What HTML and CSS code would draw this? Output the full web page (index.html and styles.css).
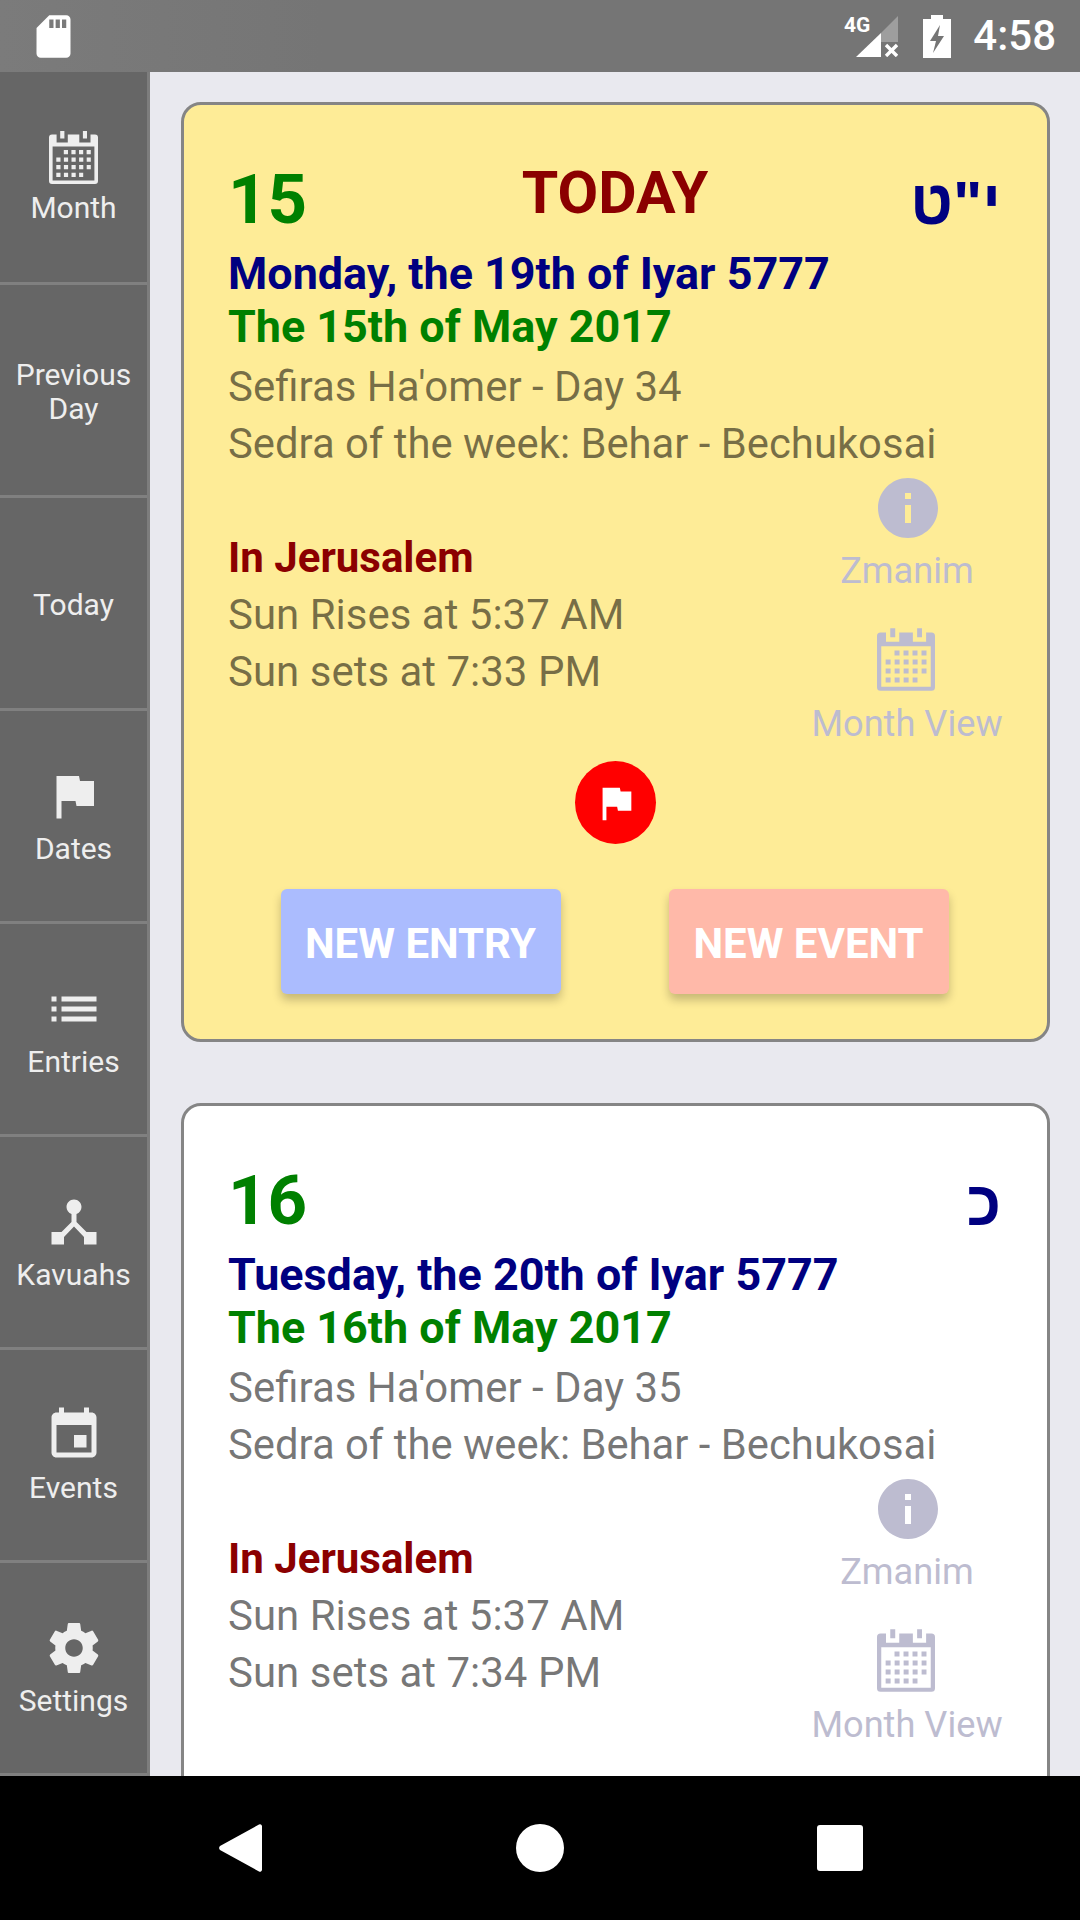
FILE: index.html
```html
<!DOCTYPE html>
<html lang="en">
<head>
  <meta charset="UTF-8">
  <title>Today</title>
  <link rel="stylesheet" href="styles.css">
</head>
<body>

  <svg class="defs" width="0" height="0">
    <symbol id="i-calendar" viewBox="0 0 49 53">
      <path fill="currentColor" fill-rule="evenodd" d="M3 3.6H46a3 3 0 0 1 3 3V50a3 3 0 0 1-3 3H3a3 3 0 0 1-3-3V6.6a3 3 0 0 1 3-3zM7.6 3.6V11.5H18.8V3.6zM30.3 3.6V11.5H41.5V3.6zM3.6 15.4V49.6H45.4V15.4z"/>
      <path fill="currentColor" d="M11.2 0h4.2v7.6h-4.2zM33.9 0H38v7.6h-4.1z"/>
      <path fill="none" stroke="currentColor" stroke-width="4.2" stroke-dasharray="4.2 3.4" d="M14.8 21.1H41.8M7.3 28.7H41.8M7.3 36.2H41.8M7.3 43.8H34.2"/>
    </symbol>
    <symbol id="i-flag" viewBox="0 0 24 24">
      <path fill="currentColor" d="M14.4 6L14 4H5v17h2v-7h5.6l.4 2h7V6z"/>
    </symbol>
    <symbol id="i-info" viewBox="0 0 24 24">
      <path fill="currentColor" d="M12 2C6.48 2 2 6.48 2 12s4.48 10 10 10 10-4.48 10-10S17.52 2 12 2zm1 15h-2v-6h2v6zm0-8h-2V7h2v2z"/>
    </symbol>
  </svg>

  <header class="status-bar">
    <svg class="sd-icon" viewBox="0 0 24 24"><path fill="currentColor" d="M18 2h-8L4.02 8 4 20c0 1.1.9 2 2 2h12c1.1 0 2-.9 2-2V4c0-1.1-.9-2-2-2zm-6 6h-2V4h2v4zm3 0h-2V4h2v4zm3 0h-2V4h2v4z"/></svg>
    <div class="status-right">
      <div class="signal">
        <span class="signal-label">4G</span>
        <svg class="signal-icon" viewBox="0 0 42 41">
          <path fill="#fff" opacity=".3" d="M25 17L42 0V26H25z"/>
          <path fill="#fff" d="M0 41L25 17V41z"/>
          <path stroke="#fff" stroke-width="3.4" d="M30 29L41 40M41 29L30 40"/>
        </svg>
      </div>
      <svg class="battery-icon" viewBox="0 0 28 43">
        <path fill="#fff" fill-rule="evenodd" d="M8 0h12v4h8v39H0V4h8zM17 10L7 26h6l-3 12L21 21h-6z"/>
      </svg>
      <span class="clock">4:58</span>
    </div>
  </header>

  <div class="app">
    <nav class="sidebar">
      <a class="nav-item">
        <svg class="nav-icon nav-icon-cal"><use href="#i-calendar"/></svg>
        <span>Month</span>
      </a>
      <a class="nav-item nav-text"><span>Previous<br>Day</span></a>
      <a class="nav-item nav-text"><span>Today</span></a>
      <a class="nav-item">
        <svg class="nav-icon"><use href="#i-flag"/></svg>
        <span>Dates</span>
      </a>
      <a class="nav-item">
        <svg class="nav-icon" viewBox="0 0 24 24"><path fill="currentColor" d="M3 13h2v-2H3v2zm0 4h2v-2H3v2zm0-8h2V7H3v2zm4 4h14v-2H7v2zm0 4h14v-2H7v2zM7 7v2h14V7H7z"/></svg>
        <span>Entries</span>
      </a>
      <a class="nav-item">
        <svg class="nav-icon" viewBox="0 0 24 24"><path fill="currentColor" d="M17 16l-4-4V8.82C14.16 8.4 15 7.3 15 6c0-1.66-1.34-3-3-3S9 4.34 9 6c0 1.3.84 2.4 2 2.82V12l-4 4H3v5h5v-3.05l4-4.2 4 4.2V21h5v-5h-4z"/></svg>
        <span>Kavuahs</span>
      </a>
      <a class="nav-item">
        <svg class="nav-icon" viewBox="0 0 24 24"><path fill="currentColor" d="M17 12h-5v5h5v-5zM16 1v2H8V1H6v2H5c-1.11 0-1.99.9-1.99 2L3 19c0 1.1.89 2 2 2h14c1.1 0 2-.9 2-2V5c0-1.1-.9-2-2-2h-1V1h-2zm3 18H5V8h14v11z"/></svg>
        <span>Events</span>
      </a>
      <a class="nav-item">
        <svg class="nav-icon" viewBox="0 0 24 24"><path fill="currentColor" d="M19.43 12.98c.04-.32.07-.64.07-.98s-.03-.66-.07-.98l2.11-1.65c.19-.15.24-.42.12-.64l-2-3.46c-.12-.22-.39-.3-.61-.22l-2.49 1c-.52-.4-1.08-.73-1.69-.98l-.38-2.65C14.46 2.18 14.25 2 14 2h-4c-.25 0-.46.18-.49.42l-.38 2.65c-.61.25-1.17.59-1.69.98l-2.49-1c-.23-.09-.49 0-.61.22l-2 3.46c-.13.22-.07.49.12.64l2.11 1.65c-.04.32-.07.65-.07.98s.03.66.07.98l-2.11 1.65c-.19.15-.24.42-.12.64l2 3.46c.12.22.39.3.61.22l2.49-1c.52.4 1.08.73 1.69.98l.38 2.65c.03.24.24.42.49.42h4c.25 0 .46-.18.49-.42l.38-2.65c.61-.25 1.17-.59 1.69-.98l2.49 1c.23.09.49 0 .61-.22l2-3.46c.12-.22.07-.49-.12-.64l-2.11-1.65zM12 15.5c-1.93 0-3.5-1.57-3.5-3.5s1.57-3.5 3.5-3.5 3.5 1.57 3.5 3.5-1.57 3.5-3.5 3.5z"/></svg>
        <span>Settings</span>
      </a>
    </nav>

    <main class="days">
      <section class="day-card is-today">
        <div class="day-head">
          <span class="day-num">15</span>
          <span class="day-today">TODAY</span>
          <span class="day-heb" lang="he" dir="rtl">י"ט</span>
        </div>
        <div class="day-jewish">Monday, the 19th of Iyar 5777</div>
        <div class="day-civil">The 15th of May 2017</div>
        <div class="day-line">Sefiras Ha'omer - Day 34</div>
        <div class="day-line day-sedra">Sedra of the week: Behar - Bechukosai</div>
        <div class="day-body">
          <div class="day-times">
            <div class="day-place">In Jerusalem</div>
            <div class="day-line">Sun Rises at 5:37 AM</div>
            <div class="day-line">Sun sets at 7:33 PM</div>
          </div>
          <div class="day-links">
            <a class="day-link">
              <svg class="link-info"><use href="#i-info"/></svg>
              <span>Zmanim</span>
            </a>
            <a class="day-link">
              <svg class="link-cal"><use href="#i-calendar"/></svg>
              <span>Month View</span>
            </a>
          </div>
        </div>
        <div class="day-flag">
          <span class="flag-dot"><svg class="flag-icon"><use href="#i-flag"/></svg></span>
        </div>
        <div class="day-actions">
          <button class="btn btn-entry">NEW ENTRY</button>
          <button class="btn btn-event">NEW EVENT</button>
        </div>
      </section>

      <section class="day-card">
        <div class="day-head">
          <span class="day-num">16</span>
          <span class="day-today"></span>
          <span class="day-heb" lang="he" dir="rtl">כ</span>
        </div>
        <div class="day-jewish">Tuesday, the 20th of Iyar 5777</div>
        <div class="day-civil">The 16th of May 2017</div>
        <div class="day-line">Sefiras Ha'omer - Day 35</div>
        <div class="day-line day-sedra">Sedra of the week: Behar - Bechukosai</div>
        <div class="day-body">
          <div class="day-times">
            <div class="day-place">In Jerusalem</div>
            <div class="day-line">Sun Rises at 5:37 AM</div>
            <div class="day-line">Sun sets at 7:34 PM</div>
          </div>
          <div class="day-links">
            <a class="day-link">
              <svg class="link-info"><use href="#i-info"/></svg>
              <span>Zmanim</span>
            </a>
            <a class="day-link">
              <svg class="link-cal"><use href="#i-calendar"/></svg>
              <span>Month View</span>
            </a>
          </div>
        </div>
        <div class="day-actions">
          <button class="btn btn-entry" aria-label="New entry"></button>
          <button class="btn btn-event" aria-label="New event"></button>
        </div>
      </section>
    </main>
  </div>

  <footer class="android-nav">
    <svg class="nav-back" viewBox="0 0 43 48"><path fill="#fff" d="M40 .6a2 2 0 0 1 3 1.6V45.800a2 2 0 0 1-3 1.600L1 26a3 3 0 0 1 0-4z"/></svg>
    <span class="nav-home"></span>
    <span class="nav-recent"></span>
  </footer>

</body>
</html>
```

FILE: styles.css
```css
* {
  box-sizing: border-box;
}

html, body {
  margin: 0;
  height: 1920px;
  overflow: hidden;
}

body {
  font-family: Roboto, sans-serif;
  display: flex;
  flex-direction: column;
  background: #000;
}

.defs {
  display: block;
  height: 0;
}

/* status bar */
.status-bar {
  height: 72px;
  flex: none;
  display: flex;
  align-items: center;
  justify-content: space-between;
  padding: 0 24px 0 28px;
  background: linear-gradient(90deg, #7b7b7b, #757575 30%);
  color: #fff;
}

.sd-icon {
  width: 51px;
  height: 51px;
}

.status-right {
  display: flex;
  align-items: center;
}

.signal {
  display: flex;
  align-items: flex-start;
  height: 41px;
  margin-right: 25px;
}

.signal-label {
  font-size: 21px;
  font-weight: 700;
  line-height: 18px;
  margin-right: -14px;
}

.signal-icon {
  width: 42px;
  height: 41px;
}

.battery-icon {
  width: 28px;
  height: 43px;
  margin-right: 22px;
}

.clock {
  font-size: 42px;
  font-weight: 500;
  line-height: 72px;
}

/* sidebar + content */
.app {
  flex: 1;
  display: flex;
  min-height: 0;
  overflow: hidden;
}

.sidebar {
  width: 150px;
  flex: none;
  background: #666;
  border-right: 3px solid #7d7d7d;
  display: flex;
  flex-direction: column;
}

.nav-item {
  height: 213px;
  flex: none;
  border-bottom: 3px solid #808080;
  color: #eee;
  font-size: 30px;
  line-height: 34px;
  text-align: center;
  display: flex;
  flex-direction: column;
  align-items: center;
  justify-content: center;
}

.nav-text {
  padding-top: 3px;
}

.nav-icon {
  width: 60px;
  height: 60px;
  margin-bottom: 6px;
  color: #eee;
}

.nav-icon-cal {
  width: 49px;
  height: 53px;
  margin-top: 1px;
  margin-bottom: 7px;
}

.days {
  flex: 1;
  min-width: 0;
  background: #e9e9ef;
  padding: 30px 30px 0 31px;
  display: flex;
  flex-direction: column;
  gap: 61px;
  overflow: hidden;
}

.day-card {
  flex: none;
  height: 940px;
  background: #fff;
  border: 3px solid #858585;
  border-radius: 20px;
  padding: 58px 0 0 44px;
}

.is-today {
  background: #feec97;
}

.day-card:not(.is-today) {
  margin-bottom: -300px;
}

.day-head {
  display: grid;
  grid-template-columns: 1fr auto 1fr;
  align-items: start;
  padding-right: 46px;
  height: 84px;
}

.day-num {
  color: #008000;
  font-size: 69px;
  font-weight: 700;
  line-height: 70px;
  padding-top: 2px;
}

.day-today {
  color: #8b0000;
  font-size: 59px;
  font-weight: 700;
  line-height: 60px;
  margin-left: 1px;
}

.day-heb {
  color: #000080;
  font-family: "Liberation Sans", sans-serif;
  font-size: 62px;
  font-weight: 700;
  line-height: 70px;
  text-align: right;
  padding-top: 5px;
}

.day-jewish,
.day-civil,
.day-place {
  font-size: 44.9px;
  font-weight: 700;
  line-height: 53px;
}

.day-jewish {
  color: #000080;
}

.day-civil {
  color: #008000;
  margin-bottom: 5px;
}

.day-place {
  color: #8b0000;
  font-size: 42px;
  line-height: 57px;
}

.day-line {
  color: rgba(0, 0, 0, 0.54);
  font-size: 42px;
  line-height: 57px;
}

.day-sedra {
  font-size: 41.8px;
}

.day-body {
  display: flex;
  justify-content: space-between;
}

.day-times {
  padding-top: 57px;
}

.day-links {
  width: 230px;
  margin-right: 25px;
  display: flex;
  flex-direction: column;
  align-items: center;
  gap: 36px;
}

.day-link {
  display: flex;
  flex-direction: column;
  align-items: center;
  color: #bdbcd0;
  font-size: 36.2px;
  line-height: 42px;
  white-space: nowrap;
}

.link-info {
  width: 72px;
  height: 72px;
  margin-bottom: 6px;
  margin-left: 2px;
}

.link-cal {
  width: 58px;
  height: 63px;
  margin-bottom: 12px;
  margin-right: 3px;
}

.day-flag {
  display: flex;
  justify-content: center;
  margin: 0 0 0 -44px;
  padding-top: 16px;
}

.flag-dot {
  width: 81px;
  height: 83px;
  border-radius: 50%;
  background: #f00;
  color: #fff;
  display: flex;
  align-items: center;
  justify-content: center;
}

.flag-icon {
  width: 46px;
  height: 46px;
}

.day-actions {
  display: flex;
  justify-content: center;
  gap: 108px;
  margin: 45px 0 0 -46px;
}

.day-body + .day-actions {
  margin-top: 33px;
}

.btn {
  width: 280px;
  height: 105px;
  border: none;
  border-radius: 6px;
  padding-top: 4px;
  color: #fff;
  font-family: Roboto, sans-serif;
  font-size: 42px;
  font-weight: 700;
  box-shadow: 0 6px 10px rgba(0, 0, 0, 0.22);
}

.btn-entry {
  background: #abbcfe;
}

.btn-event {
  background: #ffb9a9;
}

/* android nav */
.android-nav {
  position: relative;
  height: 144px;
  flex: none;
  background: #000;
}

.nav-back,
.nav-home,
.nav-recent {
  position: absolute;
  top: 48px;
}

.nav-back {
  left: 219px;
  width: 43px;
  height: 48px;
}

.nav-home {
  left: 516px;
  width: 48px;
  height: 48px;
  border-radius: 50%;
  background: #fff;
}

.nav-recent {
  left: 817px;
  top: 49px;
  width: 46px;
  height: 46px;
  border-radius: 3px;
  background: #fff;
}
```
